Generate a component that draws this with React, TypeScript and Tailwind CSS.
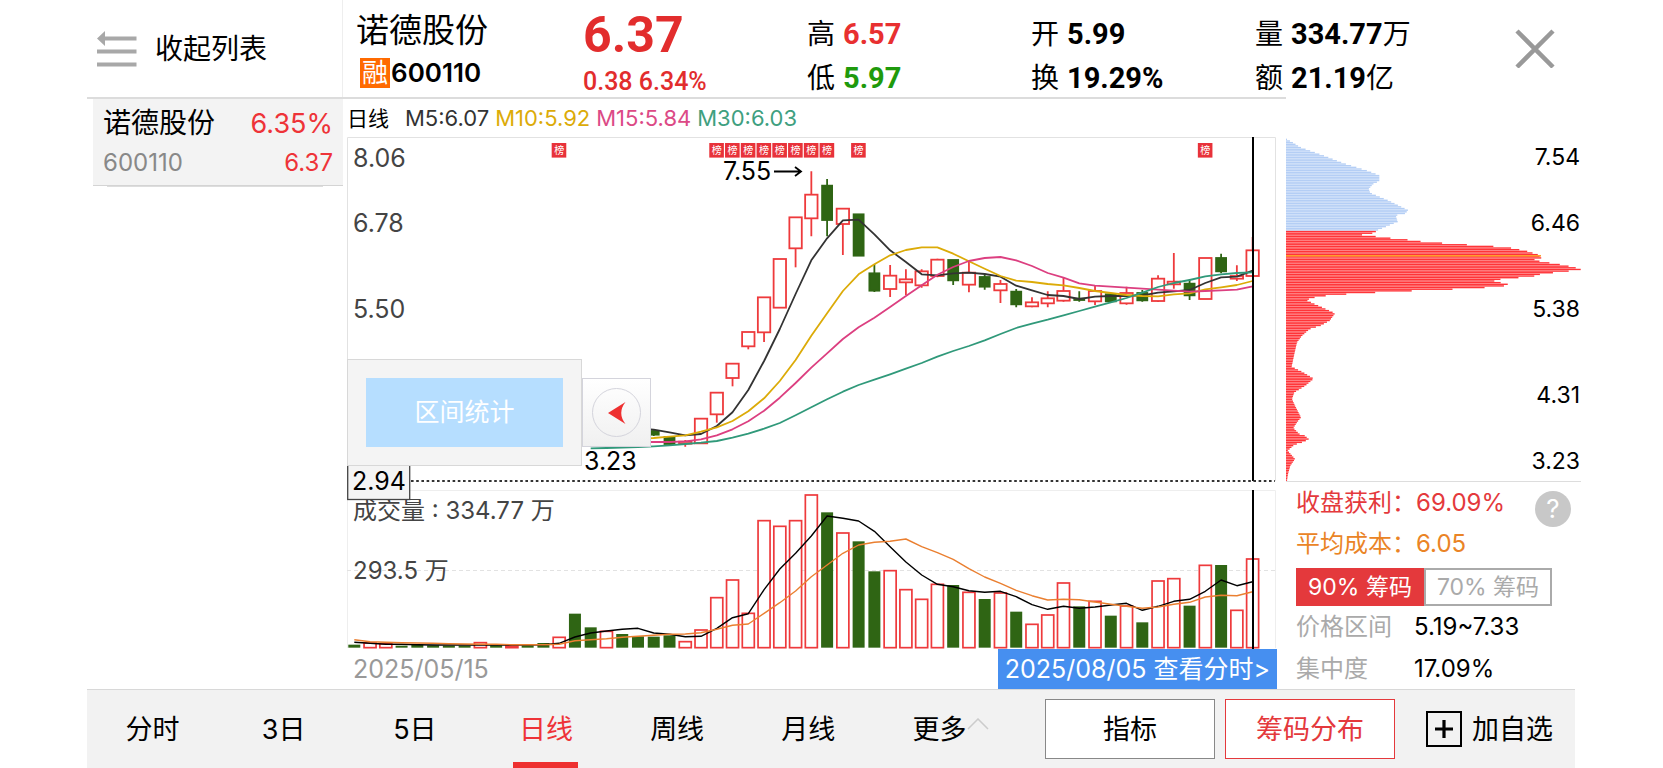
import { useState } from "react";
import clsx from "clsx";

// chart geometry
const STEP = 15.76;
const FIRST_X = 7.3;
const BAR = 12;

const RED = "#ee3a3c";
const GREEN = "#2f6514";

const cx = (i: number) => FIRST_X + i * STEP;
const priceY = (v: number) => v / 3 - 7;
const volY = (v: number) => v / 3 + 333;
const VOL_BASE = volY(533);

type Dir = "u" | "d";

// [index, direction, high, body top, body bottom, low]
const candles: [number, Dir, number, number, number, number][] = [
  [19, "d", 899, 903, 914, 918],
  [20, "d", 921, 921, 942, 945],
  [21, "u", 930, 935, 941, 950],
  [22, "u", 866, 866, 940, 940],
  [23, "u", 788, 788, 853, 878],
  [24, "u", 701, 701, 744, 769],
  [25, "u", 606, 606, 649, 658],
  [26, "u", 502, 502, 607, 636],
  [27, "u", 387, 387, 533, 533],
  [28, "u", 262, 262, 355, 412],
  [29, "u", 124, 194, 265, 319],
  [30, "d", 147, 167, 270, 319],
  [31, "u", 236, 236, 282, 375],
  [32, "d", 253, 253, 377, 377],
  [33, "d", 402, 430, 482, 486],
  [34, "u", 405, 437, 477, 501],
  [35, "u", 418, 448, 457, 495],
  [36, "u", 418, 424, 466, 473],
  [37, "u", 386, 389, 438, 442],
  [38, "d", 390, 390, 451, 465],
  [39, "u", 395, 428, 464, 487],
  [40, "d", 435, 441, 470, 479],
  [41, "u", 450, 462, 481, 519],
  [42, "d", 477, 485, 523, 532],
  [43, "u", 502, 517, 529, 532],
  [44, "u", 484, 505, 520, 532],
  [45, "u", 442, 483, 512, 515],
  [46, "d", 484, 506, 510, 515],
  [47, "u", 468, 483, 514, 525],
  [48, "d", 493, 493, 514, 517],
  [49, "u", 470, 489, 520, 524],
  [50, "d", 480, 489, 511, 515],
  [51, "u", 436, 446, 513, 516],
  [52, "u", 369, 455, 463, 476],
  [53, "d", 447, 461, 496, 510],
  [54, "u", 384, 384, 507, 507],
  [55, "d", 371, 384, 424, 430],
  [56, "u", 406, 438, 446, 453],
  [57, "u", 321, 361, 438, 440],
];

const ma5 = [
  895, 899, 907, 916, 912, 888, 847, 780, 693, 597, 492, 391, 325, 271, 269, 313, 361, 396, 433, 436,
  430, 428, 432, 440, 467, 481, 495, 498, 507, 500, 498, 498, 496, 488, 484, 480, 459, 442, 440, 422,
];
const ma10 = [
  926, 924, 920, 916, 905, 892, 873, 844, 805, 753, 690, 617, 550, 483, 433, 403, 376, 360, 352, 352,
  371, 394, 416, 438, 452, 456, 462, 466, 474, 483, 489, 495, 498, 499, 493, 490, 478, 472, 465, 453,
];
const ma15 = [
  936, 936, 936, 934, 928, 916, 898, 874, 842, 803, 759, 713, 670, 627, 592, 563, 531, 498, 466, 434,
  411, 393, 384, 381, 391, 408, 429, 443, 460, 467, 470, 473, 476, 479, 482, 485, 483, 481, 479, 469,
];
const ma30 = [
  955, 954, 953, 951, 949, 946, 942, 938, 933, 923, 911, 896, 879, 856, 832, 808, 785, 765, 749, 733,
  716, 699, 680, 663, 648, 631, 612, 594, 581, 569, 556, 543, 530, 517, 504, 488, 471, 459, 450, 439,
  433, 429, 427,
];

const volumes: [Dir, number][] = [
  ["d", 524], ["u", 519], ["u", 521], ["d", 527], ["d", 524], ["d", 526], ["d", 527], ["d", 527],
  ["u", 518], ["d", 526], ["u", 528], ["d", 526], ["d", 519], ["u", 502], ["d", 431], ["d", 472],
  ["u", 484], ["d", 492], ["d", 499], ["d", 500], ["d", 496], ["u", 515], ["u", 480], ["u", 383],
  ["u", 330], ["u", 430], ["u", 152], ["u", 169], ["u", 152], ["u", 75], ["d", 127], ["u", 189],
  ["d", 214], ["d", 304], ["u", 302], ["u", 359], ["u", 388], ["u", 343], ["d", 345], ["u", 367],
  ["d", 387], ["u", 369], ["d", 425], ["u", 463], ["u", 435], ["u", 339], ["d", 409], ["u", 394],
  ["d", 437], ["u", 408], ["d", 457], ["u", 333], ["u", 326], ["d", 407], ["u", 286], ["d", 285],
  ["u", 421], ["u", 267],
];
const volMa5 = [
  517, 520, 523, 523, 524, 525, 525, 525, 525, 525, 525, 525, 524, 520, 501, 489, 483, 478, 475, 489,
  493, 500, 499, 475, 443, 431, 359, 297, 250, 198, 138, 145, 153, 184, 230, 276, 315, 343, 350, 362,
  367, 364, 380, 404, 418, 409, 415, 411, 405, 400, 421, 409, 394, 388, 364, 330, 347, 335,
];
const volMa10 = [
  509, 515, 517, 518, 519, 520, 521, 522, 523, 523, 524, 524, 524, 523, 512, 509, 506, 502, 499, 496,
  493, 492, 488, 478, 466, 462, 430, 398, 363, 320, 285, 250, 225, 217, 214, 207, 230, 248, 268, 296,
  321, 340, 361, 377, 390, 388, 389, 396, 403, 409, 415, 411, 403, 397, 381, 376, 377, 365,
];

// days on the top-trader list
const listed = [13, 23, 24, 25, 26, 27, 28, 29, 30, 32, 54];

// chip distribution outline: [y, width]
const chips: [number, number][] = [
  [5, 3], [15, 21], [29, 43], [54, 113], [77, 173], [99, 243], [113, 280], [130, 280], [139, 261],
  [154, 248], [166, 253], [189, 308], [218, 367], [229, 355], [233, 329], [252, 335], [279, 271],
  [281, 271], [287, 258], [292, 225], [296, 265], [301, 309], [306, 362], [311, 400], [316, 465],
  [321, 540], [326, 621], [331, 675], [336, 700], [341, 724], [346, 740], [351, 756], [361, 766],
  [365, 744], [370, 757], [375, 787], [380, 819], [385, 846], [390, 868], [395, 886], [400, 850],
  [405, 802], [410, 762], [415, 745], [419, 709], [424, 648], [429, 622], [434, 640], [439, 666],
  [444, 661], [449, 607], [454, 513], [459, 388], [464, 275], [469, 186], [473, 129], [478, 91],
  [483, 70], [489, 64], [497, 81], [509, 108], [527, 147], [549, 131], [564, 103], [574, 71],
  [594, 48], [614, 33], [649, 25], [687, 17], [704, 51], [723, 83], [744, 58], [764, 25], [784, 18],
  [804, 27], [839, 45], [854, 33], [871, 22], [889, 40], [894, 56], [905, 69], [916, 43], [921, 25],
  [939, 5], [964, 27], [984, 13], [1009, 6], [1029, 3],
];

const CHIP_ROW = 4.94;
const chipRows = Array.from({ length: 208 }, (_, i) => {
  const y = 5 + i * CHIP_ROW;
  const k = Math.max(1, chips.findIndex(([cy]) => cy >= y));
  const [y0, w0] = chips[k - 1];
  const [y1, w1] = chips[k];
  const width = w0 + ((w1 - w0) * (y - y0)) / (y1 - y0);
  return { y: y / 3, width: width / 3, color: y < 279 ? "#b4cef5" : "#ff3438" };
});

const linePoints = (vals: number[], start: number, y: (v: number) => number) =>
  vals.map((v, i) => `${cx(start + i).toFixed(1)},${y(v).toFixed(1)}`).join(" ");

function StockChart() {
  return (
    <svg viewBox="0 0 930 512" className="block h-auto w-full" role="img" aria-label="诺德股份 日线">
      <g fill="none" stroke="#e2e2e2" strokeWidth="1">
        <path d="M.5 344V.5H928.5V344" />
        <path d="M.5 511V353.5H928.5V511" stroke="#eeeeee" />
        <path d="M0 433.5H928" strokeDasharray="4 3" />
      </g>

      {listed.map((i) => (
        <g key={i}>
          <rect x={cx(i) - 7.5} y="6" width="14.6" height="14.6" fill="#e8323a" />
          <text x={cx(i)} y="17" fontSize="10" fill="#fff" textAnchor="middle">榜</text>
        </g>
      ))}

      <g fontSize="25" fill="#444">
        <text x="6" y="30">8.06</text>
        <text x="6" y="95">6.78</text>
        <text x="6" y="181">5.50</text>
      </g>
      <g fontSize="24" fill="#444">
        <text x="6" y="382">成交量 : 334.77 万</text>
        <text x="6" y="442">293.5 万</text>
      </g>

      {candles.map(([i, dir, high, top, bottom, low]) => (
        <g key={i} stroke={dir === "u" ? RED : GREEN} strokeWidth="1.8">
          <path d={`M${cx(i)} ${priceY(high)}V${priceY(top)}M${cx(i)} ${priceY(bottom)}V${priceY(low)}`} />
          <rect
            x={cx(i) - (dir === "u" ? 6.2 : 5)}
            y={priceY(top)}
            width={dir === "u" ? 12.4 : 10}
            height={priceY(bottom) - priceY(top)}
            fill={dir === "u" ? "none" : GREEN}
          />
        </g>
      ))}

      {volumes.map(([dir, top], i) => (
        <rect
          key={i}
          x={cx(i) - BAR / 2}
          y={volY(top)}
          width={BAR}
          height={VOL_BASE - volY(top)}
          fill={dir === "u" ? "#fff" : GREEN}
          stroke={dir === "u" ? RED : "none"}
          strokeWidth="1.7"
        />
      ))}

      <g fill="none" strokeWidth="1.8" strokeLinejoin="round">
        <polyline points={linePoints(ma5, 18, priceY)} stroke="#333" />
        <polyline points={linePoints(ma10, 18, priceY)} stroke="#dcab08" />
        <polyline points={linePoints(ma15, 18, priceY)} stroke="#dc3f80" />
        <polyline points={linePoints(ma30, 15, priceY)} stroke="#30997a" />
        <polyline points={linePoints(volMa5, 0, volY)} stroke="#000" strokeWidth="1.4" />
        <polyline points={linePoints(volMa10, 0, volY)} stroke="#ea7f30" strokeWidth="1.4" />
      </g>

      <g fontSize="25" fill="#000">
        <text x="376" y="43">7.55</text>
        <text x="237" y="333">3.23</text>
      </g>
      <path d="M427 34.5H453M448 30L454 34.5L448 39" fill="none" stroke="#000" strokeWidth="1.8" />

      <path d="M906 0V344M906 353V512" stroke="#000" strokeWidth="2" />
      <path d="M64 344H928" stroke="#333" strokeWidth="2" strokeDasharray="2.6 2.6" />
      <rect x=".7" y="328" width="62" height="34.5" fill="#f4f4f4" stroke="#444" strokeWidth="1.3" />
      <text x="5" y="353" fontSize="25">2.94</text>
    </svg>
  );
}

function ChipChart() {
  return (
    <svg viewBox="0 0 295 344" className="block h-auto w-full" role="img" aria-label="筹码分布">
      {chipRows.map((row, i) => (
        <rect key={i} y={row.y} width={row.width} height="1.4" fill={row.color} />
      ))}
      {/* average cost */}
      <rect y="118" width="255" height="1.6" fill="#ff9d2e" />
      <g fontSize="23" textAnchor="end">
        <text x="294" y="28">7.54</text>
        <text x="294" y="94">6.46</text>
        <text x="294" y="180">5.38</text>
        <text x="294" y="266">4.31</text>
        <text x="294" y="332">3.23</text>
      </g>
    </svg>
  );
}

function Stat({ label, value, unit, className }: { label: string; value: string; unit?: string; className?: string }) {
  return (
    <div className="flex h-11 items-center gap-2 text-[28px] whitespace-nowrap">
      <span>{label}</span>
      <span className="flex items-center">
        <span className={clsx("font-[Roboto] text-[29px] font-bold", className)}>{value}</span>
        {unit}
      </span>
    </div>
  );
}

const tabs = ["分时", "3日", "5日", "日线", "周线", "月线", "更多"];

export default function App() {
  const [tab, setTab] = useState("日线");
  const [range, setRange] = useState("90%");

  return (
    <div className="flex min-h-screen flex-col bg-white pr-[82px] pl-[87px] font-[Inter,'Noto_Sans_CJK_SC',sans-serif] leading-none text-black">
      <div className="flex flex-1">
        <section className="flex min-w-0 flex-1 flex-col">
          <header className="flex h-[99px] border-b-2 border-[#dcdcdc]">
            <button className="flex w-64 shrink-0 items-center gap-[18px] border-r border-[#eeeeee] pl-[10px] text-[28px]">
              <svg width="40" height="36" viewBox="0 0 40 36" fill="#a8a8a8" aria-hidden="true">
                <path d="M0 7.5L8 0V5.5H39.5V9.5H8V15Z" />
                <path d="M0 18.5H39.5V22.5H0ZM0 31.5H39.5V35.5H0Z" />
              </svg>
              收起列表
            </button>
            <div className="flex w-60 shrink-0 flex-col pt-3 pl-[13px]">
              <h1 className="text-[33px] leading-9 font-normal">诺德股份</h1>
              <p className="mt-[10px] flex items-center gap-px pl-1 text-[26px] font-semibold">
                <span className="flex size-[30px] items-center justify-center bg-[#ff6a00] text-[26px] font-normal text-white">
                  融
                </span>
                600110
              </p>
            </div>
            <div className="w-56 shrink-0 pt-2 font-[Roboto] text-[#e22d2d]">
              <p className="text-[50px] leading-[54px] font-bold">6.37</p>
              <p className="pt-1 text-[25px] leading-8 font-medium">0.38 6.34%</p>
            </div>
            <div className="w-56 shrink-0 pt-3">
              <Stat label="高" value="6.57" className="text-[#e83030]" />
              <Stat label="低" value="5.97" className="text-[#1f9a0c]" />
            </div>
            <div className="w-56 shrink-0 pt-3">
              <Stat label="开" value="5.99" />
              <Stat label="换" value="19.29%" />
            </div>
            <div className="w-0 flex-1 pt-3">
              <Stat label="量" value="334.77" unit="万" />
              <Stat label="额" value="21.19" unit="亿" />
            </div>
          </header>

          <div className="flex flex-1">
            <nav className="w-64 shrink-0 pl-[6px]">
              <a href="#600110" className="block h-[87px] border-b border-[#d4d4d4] bg-[#f3f3f3] px-[10px] pt-2">
                <span className="flex h-8 items-center justify-between text-[28px]">
                  诺德股份
                  <span className="text-[27px] text-[#ee3338]">6.35%</span>
                </span>
                <span className="flex h-12 items-center justify-between text-[24px] text-[#888]">
                  600110
                  <span className="text-[#ee3338]">6.37</span>
                </span>
              </a>
              <div className="mr-5 ml-[14px] h-px bg-[#dddddd]" />
            </nav>

            <main className="min-w-0 flex-1 pl-1">
              <div className="flex h-[38px] items-center gap-[6px] text-[22px]">
                <span className="mr-[10px] text-[21px]">日线</span>
                <span className="text-[#333]">M5:6.07</span>
                <span className="text-[#dcab08]">M10:5.92</span>
                <span className="text-[#dc4a86]">M15:5.84</span>
                <span className="text-[#409f80]">M30:6.03</span>
              </div>
              <div className="pr-[9px]">
                <div className="relative">
                  <StockChart />
                  <div className="absolute top-[222px] left-0 flex items-center">
                    <div className="border border-[#d8d8d8] bg-[#f4f4f4] p-[18px]">
                      <button className="block h-[69px] w-[197px] bg-[#b6deff] text-[25px] text-white">区间统计</button>
                    </div>
                    <button
                      aria-label="收起"
                      className="flex size-[69px] items-center justify-center border border-[#d4d4dc] bg-linear-to-b from-white to-[#f0f0f0]"
                    >
                      <span className="flex size-[49px] items-center justify-center rounded-full border border-[#d4d4dc]">
                        <svg width="18" height="24" viewBox="0 0 18 24" fill="#ee3030" aria-hidden="true">
                          <path d="M0 12L17.5 1Q9 12 17.5 23Z" />
                        </svg>
                      </span>
                    </button>
                  </div>
                </div>
                <div className="flex h-10 items-center justify-between">
                  <span className="pl-[6px] text-[25px] text-[#999]">2025/05/15</span>
                  <button className="h-10 bg-[#468ff0] px-[7px] text-[25px] text-white">2025/08/05 查看分时&gt;</button>
                </div>
              </div>
            </main>
          </div>
        </section>

        <aside className="w-[295px] shrink-0">
          <div className="flex h-[137px] justify-end pt-7 pr-[26px]">
            <button aria-label="关闭" className="size-10">
              <svg viewBox="0 0 40 40" stroke="#999" strokeWidth="4.5" aria-hidden="true">
                <path d="M2 3L38 39M38 3L2 39" />
              </svg>
            </button>
          </div>
          <ChipChart />
          <div className="relative border-t border-[#dddddd] pl-[10px] text-[24px]">
            <dl className="text-[#e4393c]">
              <div className="flex h-[41px] items-center">
                <dt className="w-[120px] whitespace-nowrap">收盘获利：</dt>
                <dd>69.09%</dd>
              </div>
              <div className="flex h-[41px] items-center text-[#ea8426]">
                <dt className="w-[120px] whitespace-nowrap">平均成本：</dt>
                <dd>6.05</dd>
              </div>
            </dl>
            <div className="mt-1 flex h-[38px] text-[23px]">
              {["90%", "70%"].map((r) => (
                <button
                  key={r}
                  onClick={() => setRange(r)}
                  className={clsx(
                    "w-32 border-2",
                    range === r ? "border-[#e4393c] bg-[#e4393c] text-white" : "border-[#aaa] bg-white text-[#aaa]",
                  )}
                >
                  {r} 筹码
                </button>
              ))}
            </div>
            <dl>
              <div className="flex h-[42px] items-center">
                <dt className="w-[118px] text-[#aaa]">价格区间</dt>
                <dd>5.19~7.33</dd>
              </div>
              <div className="flex h-[41px] items-center">
                <dt className="w-[118px] text-[#aaa]">集中度</dt>
                <dd>17.09%</dd>
              </div>
            </dl>
            <button
              aria-label="帮助"
              className="absolute top-[9px] right-[10px] flex size-[36px] items-center justify-center rounded-full bg-[#c8c8c8] text-[26px] text-white"
            >
              ?
            </button>
          </div>
        </aside>
      </div>

      <footer className="mr-[6px] flex h-[79px] items-center border-t border-[#d8d8d8] bg-[#f2f2f2] text-[27px]">
        <nav className="mr-10 flex flex-1 self-stretch">
          {tabs.map((t) => (
            <button
              key={t}
              onClick={() => setTab(t)}
              className={clsx("relative flex flex-1 items-center justify-center", tab === t && "text-[#ee3338]")}
            >
              {t}
              {t === "更多" && (
                <svg
                  className="absolute top-7 right-4"
                  width="22"
                  height="12"
                  viewBox="0 0 22 12"
                  fill="none"
                  stroke="#ccc"
                  strokeWidth="1.5"
                  aria-hidden="true"
                >
                  <path d="M1 11L11 1L21 11" />
                </svg>
              )}
              {tab === t && <span className="absolute bottom-0 h-[6px] w-[65px] bg-[#ee3030]" />}
            </button>
          ))}
        </nav>
        <button className="h-[60px] w-[170px] border border-[#888] bg-white">指标</button>
        <button className="ml-[10px] h-[60px] w-[170px] border border-[#e4393c] bg-white text-[#e4393c]">筹码分布</button>
        <button className="mr-[22px] ml-[31px] flex items-center gap-[10px]">
          <svg width="36" height="36" viewBox="0 0 36 36" fill="none" stroke="#000" aria-hidden="true">
            <rect x="1" y="1" width="34" height="34" strokeWidth="2" />
            <path d="M18 9V27M9 18H27" strokeWidth="3.2" />
          </svg>
          加自选
        </button>
      </footer>
    </div>
  );
}
